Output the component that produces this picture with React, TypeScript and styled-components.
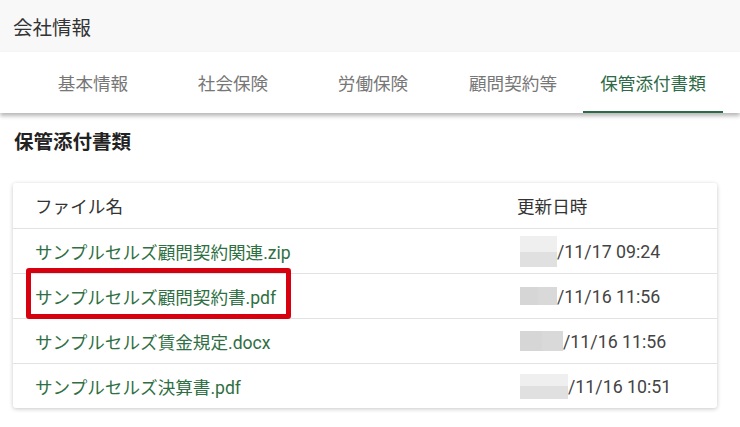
import styled, { createGlobalStyle } from "styled-components";

const GlobalStyle = createGlobalStyle`
  html, body {
    margin: 0;
    padding: 0;
    background: #ffffff;
    font-family: Roboto, "Noto Sans CJK JP", sans-serif;
  }
`;

const tabs = ["基本情報", "社会保険", "労働保険", "顧問契約等", "保管添付書類"];

type Blur = { w: number; h: number; light?: boolean };

const files: { name: string; date: string; blur: Blur; marked?: boolean }[] = [
  { name: "サンプルセルズ顧問契約関連.zip", date: "/11/17 09:24", blur: { w: 37, h: 31, light: true } },
  { name: "サンプルセルズ顧問契約書.pdf", date: "/11/16 11:56", blur: { w: 37, h: 18 }, marked: true },
  { name: "サンプルセルズ賃金規定.docx", date: "/11/16 11:56", blur: { w: 43, h: 20 } },
  { name: "サンプルセルズ決算書.pdf", date: "/11/16 10:51", blur: { w: 48, h: 25, light: true } },
];

export default function App() {
  return (
    <Page>
      <GlobalStyle />
      <TopBar>会社情報</TopBar>
      <TabBar>
        {tabs.map((t, i) => (
          <Tab key={t} $active={i === tabs.length - 1}>
            {t}
          </Tab>
        ))}
      </TabBar>
      <Content>
        <SectionTitle>保管添付書類</SectionTitle>
        <Card>
          <HeaderRow>
            <Cell>ファイル名</Cell>
            <Cell>更新日時</Cell>
          </HeaderRow>
          {files.map((f) => (
            <Row key={f.name}>
              <Cell>
                <FileLink href="#">{f.name}</FileLink>
                {f.marked && <Marker />}
              </Cell>
              <Cell>
                <Mosaic $w={f.blur.w} $h={f.blur.h} $light={f.blur.light} />
                {f.date}
              </Cell>
            </Row>
          ))}
        </Card>
      </Content>
    </Page>
  );
}

const Page = styled.div`
  width: 740px;
  min-height: 427px;
  background: #ffffff;
`;

const TopBar = styled.div`
  height: 52px;
  display: flex;
  align-items: center;
  padding-left: 13px;
  background: #f8f8f8;
  color: #333333;
  font-size: 19.5px;
`;

const TabBar = styled.div`
  height: 61px;
  display: flex;
  padding-left: 23px;
  background: #ffffff;
  box-shadow: 0 3px 4px rgba(0, 0, 0, 0.28);
  position: relative;
  z-index: 1;
`;

const Tab = styled.div<{ $active?: boolean }>`
  width: 140px;
  display: flex;
  align-items: center;
  justify-content: center;
  box-sizing: border-box;
  padding-top: 2px;
  font-size: 17.6px;
  color: ${(p) => (p.$active ? "#2d6a45" : "#777777")};
  border-bottom: 2px solid ${(p) => (p.$active ? "#2d6a47" : "transparent")};
`;

const Content = styled.div`
  padding: 15px 23px 0 13px;
`;

const SectionTitle = styled.h2`
  margin: 0 0 25px 1px;
  font-size: 19.5px;
  font-weight: 700;
  line-height: 30px;
  color: #222222;
`;

const Card = styled.div`
  border-radius: 3px;
  background: #ffffff;
  box-shadow: 0 1px 4px rgba(0, 0, 0, 0.22);
`;

const HeaderRow = styled.div`
  display: grid;
  grid-template-columns: 1fr 222px;
  height: 45px;
  box-sizing: border-box;
  align-items: center;
  color: #333333;
  font-size: 17.6px;
`;

const Row = styled(HeaderRow)`
  border-top: 1px solid #e2e2e2;
  color: #444444;
  font-size: 17.8px;
`;

const Cell = styled.div`
  position: relative;
  display: flex;
  align-items: center;
  height: 100%;
  padding: 0 22px;
`;

const FileLink = styled.a`
  color: #2f6f43;
  text-decoration: none;
  font-size: 17.6px;
`;

const Marker = styled.div`
  position: absolute;
  left: 13px;
  top: -6px;
  width: 265px;
  height: 51px;
  box-sizing: border-box;
  border: 5px solid #d7000f;
  border-radius: 3px;
  pointer-events: none;
`;

const Mosaic = styled.span<{ $w: number; $h: number; $light?: boolean }>`
  display: inline-block;
  width: ${(p) => p.$w}px;
  height: ${(p) => p.$h}px;
  margin-left: 3px;
  background: ${(p) =>
    p.$light
      ? "linear-gradient(#efeff0 0 50%, #e0e0e0 50% 100%)"
      : "linear-gradient(90deg, #d6d6d6 0 50%, #d9d9d9 50% 100%)"};
`;
